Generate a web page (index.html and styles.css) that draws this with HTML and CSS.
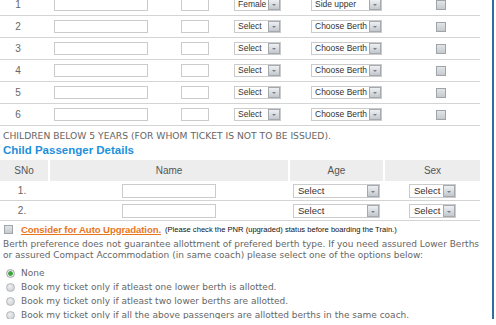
FILE: index.html
```html
<!DOCTYPE html>
<html lang="en">
<head>
    <meta charset="UTF-8">
    <title>Passenger Details</title>
    <link rel="stylesheet" href="styles.css">
</head>
<body>
    <div class="page">
        <!-- adult passengers (list is scrolled, first row is cut off) -->
        <div class="passengers">
            <div class="prow">
                <span class="sno">1</span>
                <input class="txt name" type="text">
                <input class="txt age" type="text">
                <span class="sel sex"><select><option>Female</option></select></span>
                <span class="sel berth"><select><option>Side upper</option></select></span>
                <input class="chk" type="checkbox">
            </div>
            <div class="prow">
                <span class="sno">2</span>
                <input class="txt name" type="text">
                <input class="txt age" type="text">
                <span class="sel sex"><select><option>Select</option></select></span>
                <span class="sel berth"><select><option>Choose Berth</option></select></span>
                <input class="chk" type="checkbox">
            </div>
            <div class="prow">
                <span class="sno">3</span>
                <input class="txt name" type="text">
                <input class="txt age" type="text">
                <span class="sel sex"><select><option>Select</option></select></span>
                <span class="sel berth"><select><option>Choose Berth</option></select></span>
                <input class="chk" type="checkbox">
            </div>
            <div class="prow">
                <span class="sno">4</span>
                <input class="txt name" type="text">
                <input class="txt age" type="text">
                <span class="sel sex"><select><option>Select</option></select></span>
                <span class="sel berth"><select><option>Choose Berth</option></select></span>
                <input class="chk" type="checkbox">
            </div>
            <div class="prow">
                <span class="sno">5</span>
                <input class="txt name" type="text">
                <input class="txt age" type="text">
                <span class="sel sex"><select><option>Select</option></select></span>
                <span class="sel berth"><select><option>Choose Berth</option></select></span>
                <input class="chk" type="checkbox">
            </div>
            <div class="prow">
                <span class="sno">6</span>
                <input class="txt name" type="text">
                <input class="txt age" type="text">
                <span class="sel sex"><select><option>Select</option></select></span>
                <span class="sel berth"><select><option>Choose Berth</option></select></span>
                <input class="chk" type="checkbox">
            </div>
        </div>

        <p class="note">CHILDREN BELOW 5 YEARS (FOR WHOM TICKET IS NOT TO BE ISSUED).</p>
        <h3 class="section-title">Child Passenger Details</h3>

        <div class="children">
            <div class="crow head">
                <span>SNo</span>
                <span>Name</span>
                <span>Age</span>
                <span>Sex</span>
            </div>
            <div class="crow">
                <span class="cno">1.</span>
                <span><input class="txt cname" type="text"></span>
                <span><span class="sel cage"><select><option>Select</option></select></span></span>
                <span><span class="sel csex"><select><option>Select</option></select></span></span>
            </div>
            <div class="crow">
                <span class="cno">2.</span>
                <span><input class="txt cname" type="text"></span>
                <span><span class="sel cage"><select><option>Select</option></select></span></span>
                <span><span class="sel csex"><select><option>Select</option></select></span></span>
            </div>
        </div>

        <div class="upgrade">
            <input class="chk small" type="checkbox">
            <a href="#" class="upgrade-link">Consider for Auto Upgradation.</a>
            <span class="hint">(Please check the PNR (upgraded) status before boarding the Train.)</span>
        </div>

        <p class="berth-note">Berth preference does not guarantee allottment of prefered berth type. If you need assured Lower Berths<br>or assured Compact Accommodation (in same coach) please select one of the options below:</p>

        <ul class="options">
            <li><label><input type="radio" name="berthopt" checked> None</label></li>
            <li><label><input type="radio" name="berthopt"> Book my ticket only if atleast one lower berth is allotted.</label></li>
            <li><label><input type="radio" name="berthopt"> Book my ticket only if atleast two lower berths are allotted.</label></li>
            <li><label><input type="radio" name="berthopt"> Book my ticket only if all the above passengers are allotted berths in the same coach.</label></li>
        </ul>
    </div>
</body>
</html>
```

FILE: styles.css
```css
body {
    margin: 0;
    background: #fff;
    font-family: "DejaVu Sans", Verdana, sans-serif;
    font-size: 9px;
    color: #666;
    overflow: hidden;
}

.page {
    width: 492px;
    height: 325px;
    border-right: 2px solid #2f6da3;
}

/* adult passenger rows */
.passengers {
    width: 480px;
    margin-top: -6px;
}

.prow {
    display: grid;
    grid-template-columns: 36px 130px 57px 69px 109px 79px;
    align-items: center;
    justify-items: center;
    height: 21px;
    border-bottom: 1px solid #d4d4d4;
}

.sno,
.cno {
    font-family: "Liberation Sans", Arial, sans-serif;
    font-size: 10px;
    color: #666;
}

.txt {
    display: block;
    box-sizing: border-box;
    height: 13px;
    margin: 0;
    padding: 0 2px;
    border: 1px solid #cbcbcb;
    background: #fff;
}

.txt.name { width: 94px; }
.txt.age { width: 28px; }
.txt.cname { width: 94px; height: 14px; }

.sel {
    position: relative;
    display: block;
}

.sel select {
    -webkit-appearance: none;
    appearance: none;
    display: block;
    box-sizing: border-box;
    width: 100%;
    height: 13px;
    margin: 0;
    padding: 0 0 0 3px;
    border: 1px solid #cbcbcb;
    border-radius: 0;
    background: #fff;
    font-family: "Liberation Sans", Arial, sans-serif;
    font-size: 8.5px;
    line-height: 11px;
    color: #333;
}

/* the grey drop button */
.sel::before {
    content: "";
    position: absolute;
    top: 1px;
    right: 1px;
    width: 12px;
    height: 11px;
    box-sizing: border-box;
    border: 1px solid #a3a9af;
    background: linear-gradient(#eef0f2, #c3c8ce);
}

.sel::after {
    content: "";
    position: absolute;
    top: 6px;
    right: 5px;
    border-left: 2px solid transparent;
    border-right: 2px solid transparent;
    border-top: 2px solid #7a7f85;
}

.sel.sex { width: 47px; }
.sel.berth { width: 71px; }
.sel.cage { width: 87px; }
.sel.csex { width: 47px; }

.sel.cage select,
.sel.csex select {
    height: 14px;
    font-size: 9.5px;
    padding-left: 4px;
}

.sel.cage::after,
.sel.csex::after { top: 7px; }
.sel.cage::before,
.sel.csex::before { height: 12px; }

.chk {
    -webkit-appearance: none;
    appearance: none;
    display: block;
    box-sizing: border-box;
    width: 10px;
    height: 10px;
    margin: 0;
    border: 1px solid #9fa4a9;
    background: linear-gradient(#e2e4e7, #c6cace);
}

.chk.small {
    width: 9px;
    height: 9px;
    margin-left: 4px;
}

.note {
    margin: 4px 0 0;
    padding-left: 3px;
    line-height: 12px;
    font-size: 9.2px;
    color: #666;
    white-space: nowrap;
}

.section-title {
    margin: 0 0 2px;
    padding-left: 3px;
    line-height: 16px;
    font-family: "Liberation Sans", Arial, sans-serif;
    font-size: 11.5px;
    font-weight: bold;
    color: #1e8fdc;
}

/* child table */
.children {
    width: 480px;
}

.crow {
    display: grid;
    grid-template-columns: 48px 238px 93px 95px;
    column-gap: 2px;
    align-items: center;
    height: 19px;
    border-bottom: 1px solid #d4d4d4;
}

.crow > span {
    display: flex;
    justify-content: center;
}

.crow.head {
    height: 21px;
    border-bottom: 0;
}

.crow.head > span {
    align-items: center;
    height: 100%;
    background: #ededed;
    font-family: "Liberation Sans", Arial, sans-serif;
    font-size: 10px;
    color: #555;
}

.cno { padding-right: 4px; }

.upgrade {
    display: flex;
    align-items: center;
    height: 16px;
    white-space: nowrap;
}

.upgrade-link {
    margin-left: 8px;
    font-family: "Liberation Sans", Arial, sans-serif;
    font-size: 9.6px;
    font-weight: bold;
    letter-spacing: -0.1px;
    color: #e8761e;
}

.hint {
    margin-left: 4px;
    padding-top: 1px;
    font-family: "Liberation Sans", Arial, sans-serif;
    font-size: 7.6px;
    color: #111;
}

.berth-note {
    margin: 2px 0 0;
    padding-left: 3px;
    line-height: 11px;
    font-size: 9px;
    color: #666;
    white-space: nowrap;
}

.options {
    list-style: none;
    margin: 5px 0 0;
    padding: 0;
}

.options li {
    height: 14px;
}

.options label {
    display: flex;
    align-items: center;
    gap: 6px;
    height: 14px;
    white-space: nowrap;
}

.options input {
    -webkit-appearance: none;
    appearance: none;
    box-sizing: border-box;
    width: 9px;
    height: 9px;
    margin: 0 0 0 6px;
    border: 1px solid #b3b7bb;
    border-radius: 50%;
    background: radial-gradient(circle at 40% 35%, #eeeff0, #c6cacd);
}

.options input:checked {
    border-color: #a2a7ab;
    background: radial-gradient(circle, #3fa33a 0 2px, #e6e8ea 2.6px);
}
```
